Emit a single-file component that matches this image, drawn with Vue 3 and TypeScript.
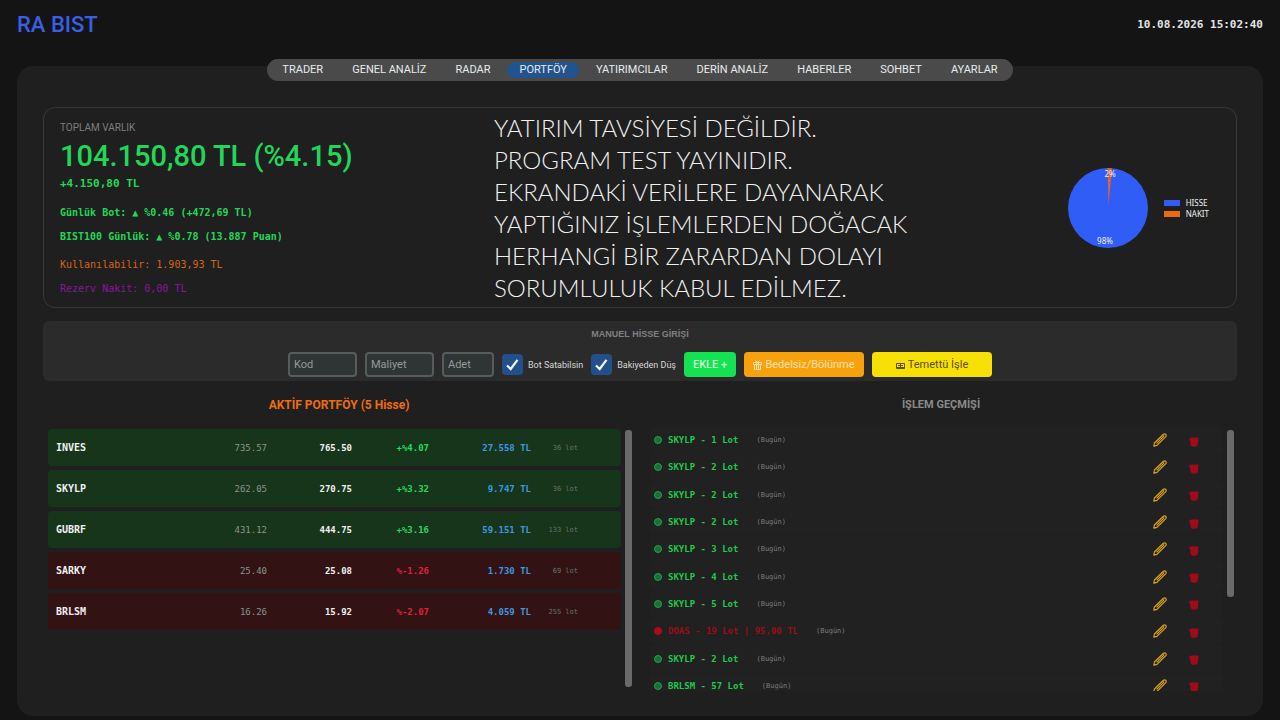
<script setup lang="ts">
import { ref } from 'vue'

interface Holding {
  code: string
  cost: string
  price: string
  change: string
  value: string
  lots: string
  up: boolean
}

interface Trade {
  text: string
  when: string
  sell?: boolean
}

const tabs: string[] = [
  'TRADER', 'GENEL ANALİZ', 'RADAR', 'PORTFÖY', 'YATIRIMCILAR',
  'DERİN ANALİZ', 'HABERLER', 'SOHBET', 'AYARLAR',
]
const activeTab = ref('PORTFÖY')

const notice: string[] = [
  'YATIRIM TAVSİYESİ DEĞİLDİR.',
  'PROGRAM TEST YAYINIDIR.',
  'EKRANDAKİ VERİLERE DAYANARAK',
  'YAPTIĞINIZ İŞLEMLERDEN DOĞACAK',
  'HERHANGİ BİR ZARARDAN DOLAYI',
  'SORUMLULUK KABUL EDİLMEZ.',
]

const code = ref('')
const cost = ref('')
const amount = ref('')
const botCanSell = ref(true)
const deductBalance = ref(true)

const holdings: Holding[] = [
  { code: 'INVES', cost: '735.57', price: '765.50', change: '+%4.07', value: '27.558 TL', lots: '36 lot', up: true },
  { code: 'SKYLP', cost: '262.05', price: '270.75', change: '+%3.32', value: '9.747 TL', lots: '36 lot', up: true },
  { code: 'GUBRF', cost: '431.12', price: '444.75', change: '+%3.16', value: '59.151 TL', lots: '133 lot', up: true },
  { code: 'SARKY', cost: '25.40', price: '25.08', change: '%-1.26', value: '1.730 TL', lots: '69 lot', up: false },
  { code: 'BRLSM', cost: '16.26', price: '15.92', change: '%-2.07', value: '4.059 TL', lots: '255 lot', up: false },
]

const trades: Trade[] = [
  { text: 'SKYLP - 1 Lot', when: '(Bugün)' },
  { text: 'SKYLP - 2 Lot', when: '(Bugün)' },
  { text: 'SKYLP - 2 Lot', when: '(Bugün)' },
  { text: 'SKYLP - 2 Lot', when: '(Bugün)' },
  { text: 'SKYLP - 3 Lot', when: '(Bugün)' },
  { text: 'SKYLP - 4 Lot', when: '(Bugün)' },
  { text: 'SKYLP - 5 Lot', when: '(Bugün)' },
  { text: 'DOAS - 19 Lot | 95,00 TL', when: '(Bugün)', sell: true },
  { text: 'SKYLP - 2 Lot', when: '(Bugün)' },
  { text: 'BRLSM - 57 Lot', when: '(Bugün)' },
]
</script>

<template>
  <div class="page">
    <header class="top">
      <h1>RA BIST</h1>
      <time datetime="2026-08-10T15:02:40">10.08.2026 15:02:40</time>
    </header>

    <main class="panel">
      <nav class="tabs">
        <button
          v-for="tab in tabs"
          :key="tab"
          type="button"
          :class="{ active: tab === activeTab }"
          @click="activeTab = tab"
        >{{ tab }}</button>
      </nav>

      <section class="summary">
        <div class="totals">
          <h2>TOPLAM VARLIK</h2>
          <p class="total">104.150,80 TL (%4.15)</p>
          <p class="profit">+4.150,80 TL</p>
          <p class="daily first">Günlük Bot: ▲ %0.46 (+472,69 TL)</p>
          <p class="daily">BIST100 Günlük: ▲ %0.78 (13.887 Puan)</p>
          <p class="available">Kullanılabilir: 1.903,93 TL</p>
          <p class="reserve">Rezerv Nakit: 0,00 TL</p>
        </div>
        <div class="notice">
          <p v-for="line in notice" :key="line">{{ line }}</p>
        </div>
        <figure class="chart">
          <svg width="80" height="80" viewBox="0 0 80 80" role="img" aria-label="Varlık dağılımı">
            <circle cx="40" cy="40" r="40" fill="#315df7" />
            <path d="M40.5 37 L39.5 0 A40 40 0 0 1 44 0.2 Z" fill="#e0622e" />
            <text x="42" y="9">2%</text>
            <text x="37" y="76">98%</text>
          </svg>
          <figcaption>
            <span><i class="stock"></i>HISSE</span>
            <span><i class="cash"></i>NAKIT</span>
          </figcaption>
        </figure>
      </section>

      <form class="entry" @submit.prevent>
        <h2>MANUEL HİSSE GİRİŞİ</h2>
        <div class="fields">
          <input v-model="code" class="text wide" type="text" placeholder="Kod" aria-label="Kod" />
          <input v-model="cost" class="text wide" type="text" placeholder="Maliyet" aria-label="Maliyet" />
          <input v-model="amount" class="text" type="text" placeholder="Adet" aria-label="Adet" />
          <label class="check">
            <span class="box">
              <input v-model="botCanSell" type="checkbox" />
              <svg v-if="botCanSell" viewBox="0 0 21 21"><path d="M5 11.5 L8.7 15 L15.5 5.8" /></svg>
            </span>
            Bot Satabilsin
          </label>
          <label class="check">
            <span class="box">
              <input v-model="deductBalance" type="checkbox" />
              <svg v-if="deductBalance" viewBox="0 0 21 21"><path d="M5 11.5 L8.7 15 L15.5 5.8" /></svg>
            </span>
            Bakiyeden Düş
          </label>
          <button type="submit" class="add">EKLE +</button>
          <button type="button" class="action split">
            <svg width="9" height="10" viewBox="0 0 9 10" fill="none" stroke="currentColor" stroke-width="1">
              <path d="M0.5 2.5h8v2h-8z M1.5 4.5v5h6v-5 M3.5 2.5v7 M5.5 2.5v7 M4.5 2.5L2.5 0.5 M4.5 2.5L6.5 0.5" />
            </svg>
            Bedelsiz/Bölünme
          </button>
          <button type="button" class="action dividend">
            <svg width="9" height="10" viewBox="0 0 9 10" fill="none" stroke="currentColor" stroke-width="1">
              <path d="M0.5 3.5h8v5h-8z M0.5 7.5h8 M2 5.5h2 M5 5.5h2 M4.5 4v3" />
            </svg>
            Temettü İşle
          </button>
        </div>
      </form>

      <div class="columns">
        <section class="column">
          <h2 class="portfolio-title">AKTİF PORTFÖY (5 Hisse)</h2>
          <div class="scroll">
            <div class="view">
              <table>
                <colgroup>
                  <col class="c-code" /><col class="c-cost" /><col class="c-price" />
                  <col class="c-change" /><col class="c-value" /><col class="c-lots" /><col />
                </colgroup>
                <tbody>
                  <tr v-for="h in holdings" :key="h.code" :class="h.up ? 'up' : 'down'">
                    <th scope="row">{{ h.code }}</th>
                    <td class="cost">{{ h.cost }}</td>
                    <td class="price">{{ h.price }}</td>
                    <td class="change">{{ h.change }}</td>
                    <td class="value">{{ h.value }}</td>
                    <td class="lots">{{ h.lots }}</td>
                    <td></td>
                  </tr>
                </tbody>
              </table>
            </div>
            <div class="track"><div class="thumb"></div></div>
          </div>
        </section>

        <section class="column">
          <h2>İŞLEM GEÇMİŞİ</h2>
          <div class="scroll">
            <div class="view">
              <ul>
                <li v-for="(t, i) in trades" :key="i" :class="{ sell: t.sell }">
                  <span class="dot"></span>
                  <span class="trade">{{ t.text }}</span>
                  <span class="when">{{ t.when }}</span>
                  <button type="button" class="edit" aria-label="Düzenle">
                    <svg width="14" height="14" viewBox="0 0 14 14" fill="none" stroke="currentColor" stroke-width="1.2" stroke-linejoin="round">
                      <path d="M0.8 13.2 L1.4 10 L10.4 1.2 Q11.6 0.3 12.7 1.3 Q13.7 2.4 12.8 3.6 L4 12.4 Z M3.6 10.4 L10.6 3.4 L10.9 2.4" />
                    </svg>
                  </button>
                  <button type="button" class="remove" aria-label="Sil">
                    <svg width="10" height="10" viewBox="0 0 10 10" fill="currentColor">
                      <path d="M0.4 1 L3 0.6 H9.4 L9.4 2.6 L8.8 7.8 L7.2 9.8 H3.4 L1.6 8.2 L1.2 4.2 L0.4 3 Z" />
                    </svg>
                  </button>
                </li>
              </ul>
            </div>
            <div class="track"><div class="thumb part"></div></div>
          </div>
        </section>
      </div>
    </main>
  </div>
</template>

<style>
body {
  margin: 0;
  background: #141414;
}
</style>

<style scoped>
.page {
  box-sizing: border-box;
  min-height: 100vh;
  padding: 0 17px 4px;
  display: flex;
  flex-direction: column;
  background: #141414;
  color: #dcdcdc;
  font-family: Roboto, "Liberation Sans", sans-serif;
  font-size: 11px;
  line-height: 16px;
}
h1, h2, p, ul, figure { margin: 0; padding: 0; }
button, input { font: inherit; }
button { border: 0; padding: 0; cursor: pointer; }

.top {
  height: 50px;
  margin-bottom: 16px;
  display: flex;
  align-items: center;
  justify-content: space-between;
}
h1 {
  color: #395fe3;
  font-size: 22px;
  font-weight: 500;
}
time {
  color: #e4e4e4;
  font: bold 11px/16px "DejaVu Sans Mono", "Liberation Mono", monospace;
}

.panel {
  flex: 1;
  padding: 0 26px 25px;
  display: flex;
  flex-direction: column;
  border-radius: 16px;
  background: #1f1f1f;
}

.tabs {
  align-self: center;
  margin: -7px 0 26px;
  padding: 3px;
  display: flex;
  gap: 5px;
  border-radius: 11px;
  background: #4a4a4a;
}
.tabs button {
  padding: 0 12px;
  border-radius: 8px;
  background: none;
  color: #e6eaee;
}
.tabs .active { background: #23538d; }

.summary {
  padding: 4px 16px 3px;
  display: grid;
  grid-template-columns: 434px 1fr auto;
  align-items: center;
  border: 1px solid #383838;
  border-radius: 12px;
}
.totals {
  font-family: "DejaVu Sans Mono", "Liberation Mono", monospace;
  font-size: 10px;
}
.totals h2 {
  color: #7e7e7e;
  font: 400 10px/16px Roboto, sans-serif;
}
.total {
  margin: 4px 0;
  color: #22d758;
  font: 500 29px/32px Roboto, sans-serif;
}
.profit { color: #22d758; font-size: 11px; font-weight: bold; }
.daily { margin-top: 8px; color: #22d758; font-weight: bold; }
.first { margin-top: 13px; }
.available { margin-top: 12px; color: #d8631c; }
.reserve { margin-top: 8px; color: #86179c; }

.notice {
  color: #f0f0f0;
  font: 300 24px/32px Lato, "Open Sans", sans-serif;
  white-space: nowrap;
}

.chart {
  margin-right: 11px;
  display: flex;
  align-items: center;
  gap: 16px;
  font: 8px/11px "Noto Sans", sans-serif;
}
.chart text {
  fill: #f0f0f0;
  font-size: 8px;
  text-anchor: middle;
}
.chart span {
  display: flex;
  align-items: center;
  gap: 6px;
  color: #f0f0f0;
}
.chart i { width: 16px; height: 6px; }
.stock { background: #315df7; }
.cash { background: #ee6a10; }

.entry {
  margin-top: 13px;
  padding: 5px 8px 4px;
  display: flex;
  flex-direction: column;
  align-items: center;
  gap: 10px;
  border-radius: 6px;
  background: #2b2b2b;
}
.entry h2 {
  color: #808080;
  font: bold 9px/16px "Liberation Sans", Arial, sans-serif;
}
.fields {
  display: flex;
  align-items: center;
  gap: 8px;
}
.text {
  box-sizing: border-box;
  width: 52px;
  height: 25px;
  padding: 0 4px;
  border: 2px solid #565b5c;
  border-radius: 4px;
  background: #2f3435;
  color: #dcdcdc;
}
.wide { width: 69px; }
.text::placeholder { color: #969a9a; opacity: 1; }
.check {
  display: flex;
  align-items: center;
  gap: 5px;
  color: #d8d8d8;
  font-size: 9px;
}
.box { display: grid; }
.box > * { grid-area: 1 / 1; width: 21px; height: 21px; }
.box input {
  appearance: none;
  margin: 0;
  border-radius: 4px;
  background: #23508a;
}
.box svg {
  fill: none;
  stroke: #f2f6fa;
  stroke-width: 2.2;
  pointer-events: none;
}
.add, .action {
  height: 25px;
  border-radius: 4px;
}
.add { width: 52px; background: #14e252; color: #c9f5c9; font-weight: 500; }
.action {
  width: 120px;
  display: flex;
  align-items: center;
  justify-content: center;
  gap: 3px;
}
.split { background: #f7a20c; color: #fae0b4; }
.dividend { background: #f8e006; color: #57500e; }

.columns {
  flex: 1;
  margin-top: 16px;
  display: grid;
  grid-template-columns: 1fr 1fr;
  gap: 10px;
}
.column {
  display: flex;
  flex-direction: column;
  gap: 12px;
}
.column h2 {
  color: #8a8a8a;
  font-size: 11px;
  font-weight: 700;
  text-align: center;
}
.column .portfolio-title { color: #ee6c12; font-size: 12px; }
.scroll {
  flex: 1;
  padding: 0 3px 0 5px;
  display: flex;
  gap: 4px;
  font-family: "DejaVu Sans Mono", "Liberation Mono", monospace;
}
.view {
  flex: 1;
  height: 266px;
  overflow: hidden;
}
.track { width: 7px; height: 257px; padding-top: 5px; }
.thumb { height: 100%; border-radius: 3px; background: #6a6a6a; }
.part { height: 65%; }

table {
  width: 100%;
  border-collapse: separate;
  border-spacing: 0 4px;
  table-layout: fixed;
  font-size: 9px;
}
.c-code { width: 140px; }
.c-cost { width: 79px; }
.c-price { width: 85px; }
.c-change { width: 77px; }
.c-value { width: 102px; }
.c-lots { width: 47px; }
th, td {
  height: 37px;
  padding: 0;
  text-align: right;
  font-weight: bold;
  white-space: nowrap;
}
th {
  padding-left: 8px;
  border-radius: 4px 0 0 4px;
  color: #f0f0f0;
  font-size: 10px;
  text-align: left;
}
td:last-child { border-radius: 0 4px 4px 0; }
.up > * { background: #17351b; }
.down > * { background: #331214; }
tr .cost { color: #8c948c; font-weight: normal; }
tr .price { color: #f0f0f0; }
.up .change { color: #22dc5a; }
.down .change { color: #e0203c; }
tr .value { color: #3d97e0; }
tr .lots { color: #6a726a; font-size: 7px; font-weight: normal; }

ul {
  height: 272px;
  padding-top: 2px;
  display: grid;
  grid-template-rows: repeat(10, 1fr);
  row-gap: 1px;
  list-style: none;
}
li {
  padding: 0 24px 0 4px;
  display: flex;
  align-items: center;
  border-radius: 4px;
  background: #212121;
  color: #1fc94e;
}
.dot {
  box-sizing: border-box;
  width: 8px;
  height: 8px;
  margin-right: 6px;
  border: 1px solid #22a34a;
  border-radius: 50%;
  background: #1a6e38;
}
.trade { font-size: 9px; font-weight: bold; }
.when { margin-left: 18px; color: #7c7c7c; font-size: 7px; }
.sell { color: #990d18; }
.sell .dot { border-color: #b00a18; background: #b00a18; }
.sell .when { color: #7c7c7c; }
.edit, .remove { display: flex; background: none; }
.edit { margin-left: auto; color: #d9a11c; }
.remove { margin-left: 22px; padding-top: 3px; color: #a10a1a; }
</style>
